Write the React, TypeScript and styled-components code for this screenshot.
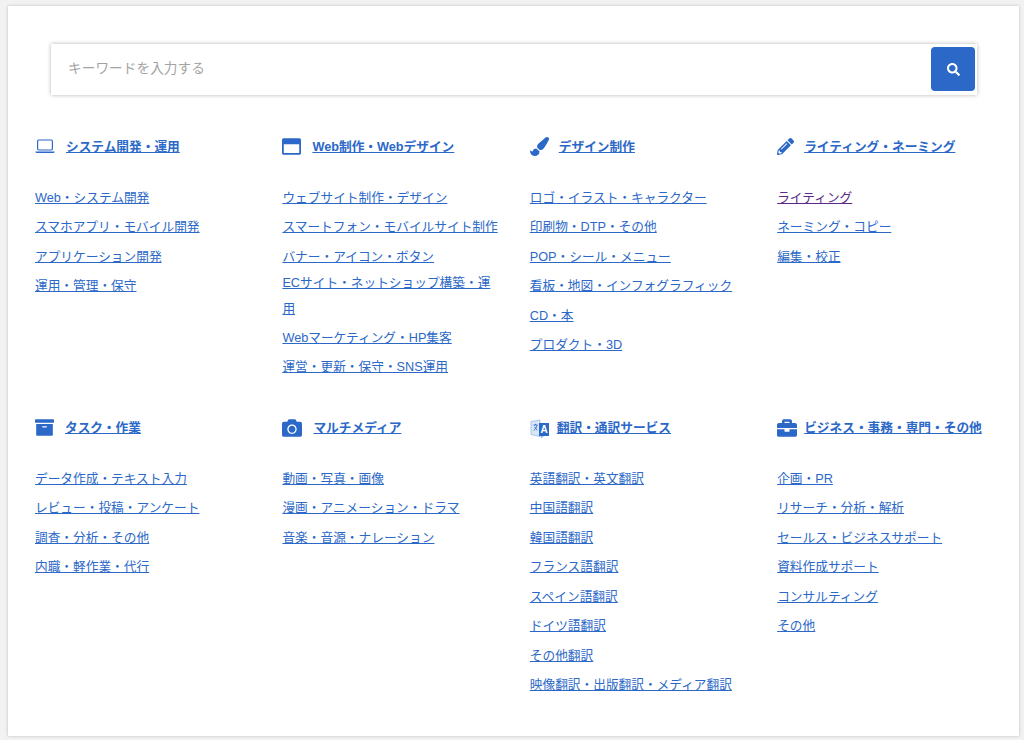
import React from 'react';
import styled, {createGlobalStyle} from 'styled-components';
import {
  FaArchive,
  FaBriefcase,
  FaCamera,
  FaPaintBrush,
  FaPencilAlt,
  FaRegWindowMaximize,
  FaSearch,
} from 'react-icons/fa';

const BLUE = '#2b68c8';

const GlobalStyle = createGlobalStyle`
  html, body {
    margin: 0;
    background: #f2f2f2;
    height: 740px;
    overflow: hidden;
    font-family: "Liberation Sans", "Noto Sans CJK JP", sans-serif;
  }
`;

const Panel = styled.main`
  box-sizing: border-box;
  width: 1011px;
  height: 730px;
  margin: 6px 0 0 8px;
  padding: 38px 0 0 27px;
  background: #fff;
  box-shadow: 0 0 3px rgba(0, 0, 0, 0.22);
`;

const SearchBar = styled.form`
  box-sizing: border-box;
  display: flex;
  align-items: center;
  justify-content: space-between;
  width: 926px;
  height: 51px;
  margin-left: 16px;
  padding: 0 2px 1px 17px;
  background: #fff;
  box-shadow: 0 0 4px rgba(0, 0, 0, 0.3);
`;

const SearchInput = styled.input`
  flex: 1;
  border: 0;
  outline: 0;
  padding: 0;
  margin-bottom: 2px;
  font: inherit;
  font-size: 13.7px;
  color: #333;
  &::placeholder {
    color: #a3a3a3;
    opacity: 1;
  }
`;

const SearchButton = styled.button`
  display: flex;
  align-items: center;
  justify-content: center;
  width: 44px;
  height: 44px;
  border: 0;
  border-radius: 4px;
  padding: 0;
  background: ${BLUE};
  color: #fff;
  font-size: 13px;
`;

const Grid = styled.div`
  display: grid;
  grid-template-columns: repeat(4, 247.4px);
  row-gap: 31.5px;
  margin-top: 38px;
`;

const Section = styled.section`
  min-width: 0;
`;

const Heading = styled.h2`
  display: flex;
  align-items: center;
  height: 24px;
  margin: 0 0 26.5px;
  font-size: 12.7px;
  font-weight: 700;
`;

const IconSlot = styled.span<{$width: number; $size: number}>`
  display: flex;
  align-items: center;
  flex: none;
  width: ${props => props.$width}px;
  padding-top: 3px;
  color: ${BLUE};
  font-size: ${props => props.$size}px;
`;

const HeadingLink = styled.a`
  color: ${BLUE};
  text-decoration: underline;
  white-space: nowrap;
`;

const List = styled.ul`
  list-style: none;
  margin: 0;
  padding: 0;
  width: 218px;
`;

const Item = styled.li<{$wrapped?: boolean}>`
  font-size: 12.7px;
  line-height: ${props => (props.$wrapped ? '26px' : '29.5px')};
  ${props => props.$wrapped && 'margin: -1.75px 0 1.25px;'}
`;

const ItemLink = styled.a<{$visited?: boolean}>`
  color: ${props => (props.$visited ? '#5b2a86' : BLUE)};
  text-decoration: underline;
`;

const TranslateSvg = styled.svg`
  margin-top: 2px;
`;

const LaptopIcon = () => (
  <svg width="20" height="15" viewBox="0 0 20 15" fill="none">
    <rect x="2.6" y="1" width="14.8" height="10" rx="1.2" stroke={BLUE} strokeWidth="1.2" />
    <path d="M0.5 12.4h19v0.6a1 1 0 0 1-1 1h-17a1 1 0 0 1-1-1z" fill={BLUE} />
  </svg>
);

const TranslateIcon = () => (
  <TranslateSvg width="20" height="20" viewBox="0 0 20 20">
    <path d="M1 2.5 10 1v16.5L1 15.5z" fill="#dbe6f6" stroke="#8fb0e2" strokeWidth="0.7" />
    <path d="M3.4 6h4.2M5.5 4.8v1.2M7 6c-.5 2.6-1.6 4.4-3.4 5.6M4.6 7.8c.7 1.5 1.6 2.6 2.8 3.4" fill="none" stroke="#2b68c8" strokeWidth="0.9" />
    <path d="M9 4h10v13H9z" fill={BLUE} />
    <path d="M11 17 10.5 19.5 14 17z" fill="#8fb0e2" />
    <text x="14" y="14" textAnchor="middle" fontSize="10" fontWeight="700" fill="#fff" fontFamily="Liberation Sans">
      A
    </text>
  </TranslateSvg>
);

type Category = {
  title: string;
  icon: React.ReactNode;
  slot: number;
  size: number;
  items: string[];
};

const categories: Category[] = [
  {
    title: 'システム開発・運用',
    icon: <LaptopIcon />,
    slot: 31,
    size: 19,
    items: ['Web・システム開発', 'スマホアプリ・モバイル開発', 'アプリケーション開発', '運用・管理・保守'],
  },
  {
    title: 'Web制作・Webデザイン',
    icon: <FaRegWindowMaximize />,
    slot: 30,
    size: 19,
    items: [
      'ウェブサイト制作・デザイン',
      'スマートフォン・モバイルサイト制作',
      'バナー・アイコン・ボタン',
      'ECサイト・ネットショップ構築・運用',
      'Webマーケティング・HP集客',
      '運営・更新・保守・SNS運用',
    ],
  },
  {
    title: 'デザイン制作',
    icon: <FaPaintBrush />,
    slot: 29,
    size: 19,
    items: ['ロゴ・イラスト・キャラクター', '印刷物・DTP・その他', 'POP・シール・メニュー', '看板・地図・インフォグラフィック', 'CD・本', 'プロダクト・3D'],
  },
  {
    title: 'ライティング・ネーミング',
    icon: <FaPencilAlt />,
    slot: 27,
    size: 17,
    items: ['ライティング', 'ネーミング・コピー', '編集・校正'],
  },
  {
    title: 'タスク・作業',
    icon: <FaArchive />,
    slot: 30,
    size: 19,
    items: ['データ作成・テキスト入力', 'レビュー・投稿・アンケート', '調査・分析・その他', '内職・軽作業・代行'],
  },
  {
    title: 'マルチメディア',
    icon: <FaCamera />,
    slot: 31,
    size: 20,
    items: ['動画・写真・画像', '漫画・アニメーション・ドラマ', '音楽・音源・ナレーション'],
  },
  {
    title: '翻訳・通訳サービス',
    icon: <TranslateIcon />,
    slot: 27,
    size: 19,
    items: ['英語翻訳・英文翻訳', '中国語翻訳', '韓国語翻訳', 'フランス語翻訳', 'スペイン語翻訳', 'ドイツ語翻訳', 'その他翻訳', '映像翻訳・出版翻訳・メディア翻訳'],
  },
  {
    title: 'ビジネス・事務・専門・その他',
    icon: <FaBriefcase />,
    slot: 27,
    size: 20,
    items: ['企画・PR', 'リサーチ・分析・解析', 'セールス・ビジネスサポート', '資料作成サポート', 'コンサルティング', 'その他'],
  },
];

export default function App() {
  return (
    <>
      <GlobalStyle />
      <Panel>
        <SearchBar onSubmit={e => e.preventDefault()}>
          <SearchInput placeholder="キーワードを入力する" />
          <SearchButton type="submit" aria-label="検索">
            <FaSearch />
          </SearchButton>
        </SearchBar>
        <Grid>
          {categories.map(category => (
            <Section key={category.title}>
              <Heading>
                <IconSlot $width={category.slot} $size={category.size}>
                  {category.icon}
                </IconSlot>
                <HeadingLink href="#">{category.title}</HeadingLink>
              </Heading>
              <List>
                {category.items.map(item => (
                  <Item key={item} $wrapped={item.startsWith('ECサイト')}>
                    <ItemLink href="#" $visited={item === 'ライティング'}>
                      {item}
                    </ItemLink>
                  </Item>
                ))}
              </List>
            </Section>
          ))}
        </Grid>
      </Panel>
    </>
  );
}
